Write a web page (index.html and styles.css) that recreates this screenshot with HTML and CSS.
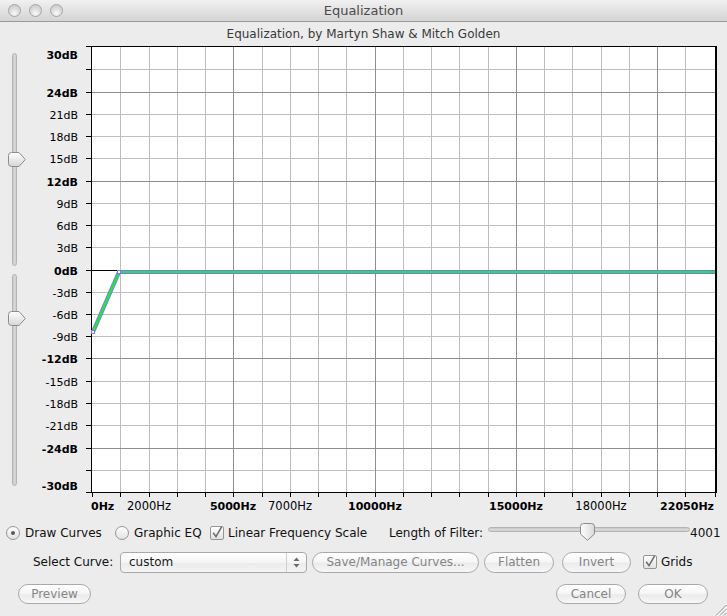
FILE: index.html
```html
<!DOCTYPE html>
<html>
<head>
<meta charset="utf-8">
<title>Equalization</title>
<link rel="stylesheet" href="styles.css">
</head>
<body>
<div class="window">
  <div class="titlebar">
    <div class="lights"><span class="light"></span><span class="light"></span><span class="light"></span></div>
    <div class="title">Equalization</div>
    <div></div>
  </div>
  <div class="subtitle">Equalization, by Martyn Shaw &amp; Mitch Golden</div>
  <div class="main">
    <div class="sliders">
      <div class="vslider vs-top">
        <div class="vtrack"></div>
        <svg class="vthumb vthumb-top" width="19" height="15" viewBox="0 0 19 15"><defs><linearGradient id="tg1" x1="0" y1="0" x2="0" y2="1"><stop offset="0" stop-color="#ffffff"/><stop offset="1" stop-color="#d6d6d6"/></linearGradient></defs><path d="M1.5 3.5Q1.5 0.5 4.5 0.5H12L18.3 7.5L12 14.5H4.5Q1.5 14.5 1.5 11.5Z" fill="url(#tg1)" stroke="#8c8c8c"/></svg>
      </div>
      <div class="vslider vs-bottom">
        <div class="vtrack"></div>
        <svg class="vthumb vthumb-bottom" width="19" height="15" viewBox="0 0 19 15"><path d="M1.5 3.5Q1.5 0.5 4.5 0.5H12L18.3 7.5L12 14.5H4.5Q1.5 14.5 1.5 11.5Z" fill="url(#tg1)" stroke="#8c8c8c"/></svg>
      </div>
    </div>
    <svg class="chart" width="697" height="478" viewBox="30 40 697 478">
      <rect x="91" y="46" width="625" height="446" fill="#ffffff"/>
      <g shape-rendering="crispEdges" fill="none">
        <path stroke="#bebebe" d="M120.5 46V492M149.5 46V492M177.5 46V492M205.5 46V492M262.5 46V492M290.5 46V492M318.5 46V492M346.5 46V492M403.5 46V492M431.5 46V492M459.5 46V492M488.5 46V492M544.5 46V492M572.5 46V492M601.5 46V492M629.5 46V492M685.5 46V492"/>
        <path stroke="#bebebe" d="M91 69.5H716M91 114.5H716M91 136.5H716M91 158.5H716M91 203.5H716M91 225.5H716M91 247.5H716M91 292.5H716M91 314.5H716M91 336.5H716M91 381.5H716M91 403.5H716M91 425.5H716M91 470.5H716"/>
        <path stroke="#8e8e8e" d="M233.5 46V492M375.5 46V492M516.5 46V492M657.5 46V492M91 92.5H716M91 181.5H716M91 358.5H716M91 448.5H716"/>
        <path stroke="#000000" d="M91 270.5H716"/>
        <path stroke="#000000" d="M90 46.5H717M91.5 46V493M90 492.5H717"/>
        <path stroke="#000000" stroke-width="2" d="M716 46V493"/>
        <path stroke="#000000" d="M86 46.5H91M86 69.5H91M86 92.5H91M86 114.5H91M86 136.5H91M86 158.5H91M86 181.5H91M86 203.5H91M86 225.5H91M86 247.5H91M86 270.5H91M86 292.5H91M86 314.5H91M86 336.5H91M86 358.5H91M86 381.5H91M86 403.5H91M86 425.5H91M86 448.5H91M86 470.5H91M86 492.5H91"/>
        <path stroke="#000000" d="M92.5 492V497M120.5 492V497M149.5 492V497M177.5 492V497M205.5 492V497M233.5 492V497M262.5 492V497M290.5 492V497M318.5 492V497M346.5 492V497M375.5 492V497M403.5 492V497M431.5 492V497M459.5 492V497M488.5 492V497M516.5 492V497M544.5 492V497M572.5 492V497M601.5 492V497M629.5 492V497M657.5 492V497M685.5 492V497M715.5 492V497"/>
      </g>
      <polyline points="93,332 119,272" fill="none" stroke="#8073ee" stroke-width="4.2"/>
      <polyline points="93,332 119,272" fill="none" stroke="#22e63c" stroke-width="2.4"/>
      <g shape-rendering="crispEdges">
        <rect x="118" y="270" width="597" height="4" fill="#8073ee"/>
        <rect x="118" y="271" width="597" height="2" fill="#22e63c"/>
      </g>
      <rect x="91.5" y="330.5" width="3" height="3" fill="#ffffff" stroke="#8073ee"/>
      <rect x="117.5" y="270.5" width="3" height="3" fill="#ffffff" stroke="#8073ee"/>
      <g class="ylab">
        <text x="78" y="59" class="b">30dB</text>
        <text x="78" y="97" class="b">24dB</text>
        <text x="78" y="119">21dB</text>
        <text x="78" y="141">18dB</text>
        <text x="78" y="163">15dB</text>
        <text x="78" y="186" class="b">12dB</text>
        <text x="78" y="208">9dB</text>
        <text x="78" y="230">6dB</text>
        <text x="78" y="252">3dB</text>
        <text x="78" y="275" class="b">0dB</text>
        <text x="78" y="297">-3dB</text>
        <text x="78" y="319">-6dB</text>
        <text x="78" y="341">-9dB</text>
        <text x="78" y="363" class="b">-12dB</text>
        <text x="78" y="386">-15dB</text>
        <text x="78" y="408">-18dB</text>
        <text x="78" y="430">-21dB</text>
        <text x="78" y="453" class="b">-24dB</text>
        <text x="78" y="490" class="b">-30dB</text>
      </g>
      <g class="xlab">
        <text x="91" y="510" class="b start">0Hz</text>
        <text x="149" y="510" class="r">2000Hz</text>
        <text x="233" y="510" class="b">5000Hz</text>
        <text x="290" y="510" class="r">7000Hz</text>
        <text x="375" y="510" class="b">10000Hz</text>
        <text x="516" y="510" class="b">15000Hz</text>
        <text x="601" y="510" class="r">18000Hz</text>
        <text x="714" y="510" class="b end">22050Hz</text>
      </g>
    </svg>
  </div>
  <div class="row row1">
    <div class="opt opt-draw"><span class="radio"><span class="dot"></span></span><span>Draw Curves</span></div>
    <div class="opt opt-geq"><span class="radio"></span><span>Graphic EQ</span></div>
    <div class="opt opt-lin"><span class="check"><svg width="14" height="14" viewBox="0 0 14 14"><path d="M3.2 6.8L6 10.6L11.6 0.8" fill="none" stroke="#6e6e6e" stroke-width="1.6"/></svg></span><span>Linear Frequency Scale</span></div>
    <div class="filter-label">Length of Filter:</div>
    <div class="hslider">
      <div class="htrack"></div>
      <svg class="hthumb" width="15" height="18" viewBox="0 0 15 18"><defs><linearGradient id="tg2" x1="0" y1="0" x2="1" y2="0"><stop offset="0" stop-color="#ffffff"/><stop offset="1" stop-color="#d8d8d8"/></linearGradient></defs><path d="M0.5 3.5Q0.5 0.5 3.5 0.5H11.5Q14.5 0.5 14.5 3.5V11L7.5 17.3L0.5 11Z" fill="url(#tg2)" stroke="#8c8c8c"/></svg>
    </div>
    <div class="filter-val">4001</div>
  </div>
  <div class="row row2">
    <div class="curve-label">Select Curve:</div>
    <div class="popup"><span class="popup-text">custom</span><span class="popup-arrows"><svg width="7" height="11" viewBox="0 0 7 11"><path d="M3.5 0.5L6.5 4H0.5Z M3.5 10.5L6.5 7H0.5Z" fill="#6a6a6a"/></svg></span></div>
    <div class="btn btn-save">Save/Manage Curves...</div>
    <div class="btn btn-flatten">Flatten</div>
    <div class="btn btn-invert">Invert</div>
    <div class="opt opt-grids"><span class="check"><svg width="14" height="14" viewBox="0 0 14 14"><path d="M3.2 6.8L6 10.6L11.6 0.8" fill="none" stroke="#6e6e6e" stroke-width="1.6"/></svg></span><span>Grids</span></div>
  </div>
  <div class="row row3">
    <div class="btn btn-preview">Preview</div>
    <div class="spacer"></div>
    <div class="btn btn-cancel">Cancel</div>
    <div class="btn btn-ok">OK</div>
  </div>
  <svg class="grip" width="13" height="13" viewBox="0 0 13 13"><path d="M12.5 2L2 12.5M12.5 6L6 12.5M12.5 10L10 12.5" stroke="#9a9a9a" stroke-width="1"/><path d="M13 3L3 13M13 7L7 13" stroke="#ffffff" stroke-width="1"/></svg>
</div>
</body>
</html>
```
FILE: styles.css
```css
html, body {
  margin: 0;
  padding: 0;
  background: #ececec;
}
body {
  font-family: "DejaVu Sans", "Liberation Sans", sans-serif;
  font-size: 12px;
  color: #111111;
}
.window {
  position: relative;
  width: 727px;
  height: 616px;
  overflow: hidden;
  background: #ececec;
}
.titlebar {
  height: 21px;
  border-bottom: 1px solid #9b9b9b;
  background: linear-gradient(#f1f1f1, #e2e2e2 50%, #d4d4d4);
  display: grid;
  grid-template-columns: 1fr auto 1fr;
  align-items: center;
}
.lights {
  display: flex;
  gap: 8px;
  padding-left: 8px;
}
.light {
  width: 13px;
  height: 13px;
  box-sizing: border-box;
  border-radius: 50%;
  border: 1px solid #a6a6a6;
  background: radial-gradient(circle at 50% 75%, #fbfbfb 0, #dedede 45%, #c4c4c4 100%);
}
.title {
  font-size: 13px;
  line-height: 21px;
  color: #4b4b4b;
}
.subtitle {
  height: 13px;
  padding-top: 5px;
  line-height: 14px;
  text-align: center;
  color: #3a3a3a;
}
.main {
  display: flex;
  height: 478px;
}
.sliders {
  width: 30px;
  flex: none;
  box-sizing: border-box;
  padding-top: 13px;
  display: flex;
  flex-direction: column;
  gap: 8px;
}
.vslider {
  position: relative;
  width: 30px;
}
.vs-top { height: 213px; }
.vs-bottom { height: 212px; }
.vtrack {
  margin-left: 12px;
  width: 5px;
  height: 100%;
  box-sizing: border-box;
  border-radius: 3px;
  border: 1px solid #b4b4b4;
  background: linear-gradient(90deg, #c4c4c4, #dadada 50%, #cbcbcb);
}
.vthumb {
  position: absolute;
  left: 7px;
}
.vthumb-top { top: 99px; }
.vthumb-bottom { top: 37px; }
.chart {
  display: block;
  flex: none;
}
.chart text {
  font-family: "DejaVu Sans", sans-serif;
  font-size: 11px;
  fill: #000000;
}
.ylab text { text-anchor: end; }
.xlab text { text-anchor: middle; }
.xlab text.start { text-anchor: start; }
.xlab text.end { text-anchor: end; }
.chart text.b { font-weight: bold; }
.chart text.r { font-size: 11.5px; }

.row {
  display: flex;
  align-items: center;
  box-sizing: border-box;
}
.row1 {
  height: 30px;
  padding-left: 6px;
}
.opt {
  display: flex;
  align-items: center;
  gap: 5px;
  flex: none;
}
.opt-draw { width: 109px; }
.opt-geq { width: 95px; }
.opt-lin { width: 179px; gap: 4px; }
.radio {
  width: 14px;
  height: 14px;
  box-sizing: border-box;
  border-radius: 50%;
  border: 1px solid #959595;
  background: linear-gradient(#ffffff, #f0f0f0 50%, #e2e2e2);
  display: flex;
  align-items: center;
  justify-content: center;
  flex: none;
}
.dot {
  width: 4px;
  height: 4px;
  border-radius: 50%;
  background: #5a5a5a;
}
.check {
  width: 14px;
  height: 14px;
  box-sizing: border-box;
  border: 1px solid #959595;
  border-radius: 2px;
  background: linear-gradient(#ffffff, #f0f0f0 50%, #e2e2e2);
  flex: none;
  display: flex;
  overflow: visible;
}
.check svg {
  display: block;
  margin: -1px 0 0 -1px;
  overflow: visible;
}
.filter-label {
  width: 99px;
  flex: none;
}
.hslider {
  position: relative;
  width: 202px;
  height: 18px;
  flex: none;
  margin-top: -2px;
}
.htrack {
  margin-top: 4px;
  height: 5px;
  box-sizing: border-box;
  border-radius: 3px;
  border: 1px solid #b4b4b4;
  background: linear-gradient(#c4c4c4, #dadada 50%, #cbcbcb);
}
.hthumb {
  position: absolute;
  left: 92px;
  top: 0;
}
.filter-val {
  flex: none;
}

.row2 {
  height: 28px;
  padding-left: 33px;
}
.curve-label {
  width: 87px;
  flex: none;
}
.popup {
  width: 187px;
  height: 21px;
  box-sizing: border-box;
  border: 1px solid #a9a9a9;
  border-radius: 4px;
  background: linear-gradient(#ffffff, #f5f5f5 50%, #ebebeb 51%, #f4f4f4);
  display: flex;
  align-items: stretch;
  flex: none;
}
.popup-text {
  flex: 1;
  padding-left: 8px;
  line-height: 19px;
  color: #1a1a1a;
}
.popup-arrows {
  width: 19px;
  border-left: 1px solid #cfcfcf;
  display: flex;
  align-items: center;
  justify-content: center;
}
.btn {
  height: 21px;
  box-sizing: border-box;
  border: 1px solid #a9a9a9;
  border-radius: 11px;
  background: linear-gradient(#ffffff, #f6f6f6 45%, #ebebeb 55%, #f7f7f7);
  color: #858585;
  display: flex;
  align-items: center;
  justify-content: center;
  flex: none;
  white-space: nowrap;
}
.btn-save { width: 167px; margin-left: 5px; }
.btn-flatten { width: 70px; margin-left: 5px; }
.btn-invert { width: 69px; margin-left: 8px; }
.opt-grids { margin-left: 12px; gap: 4px; }

.row3 {
  padding-top: 8px;
  padding-left: 18px;
  padding-right: 19px;
}
.row3 .btn { height: 20px; border-radius: 10px; }
.btn-preview { width: 73px; }
.spacer { flex: 1; }
.btn-cancel { width: 70px; }
.btn-ok { width: 70px; margin-left: 12px; }

.grip {
  position: absolute;
  right: 0;
  bottom: 0;
}
```
